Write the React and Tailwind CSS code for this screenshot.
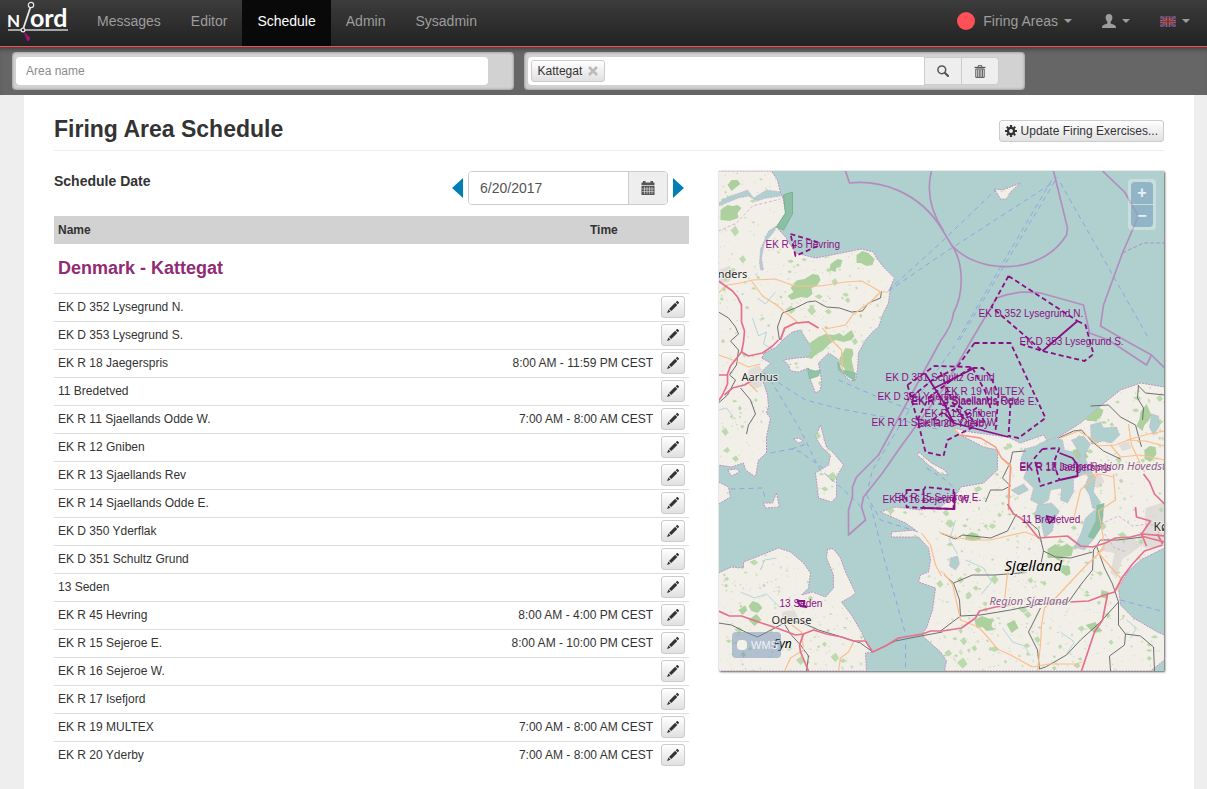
import React from "react";

const NAV = ["Messages", "Editor", "Schedule", "Admin", "Sysadmin"];

const AREAS = [
  ["EK D 352 Lysegrund N.", ""],
  ["EK D 353 Lysegrund S.", ""],
  ["EK R 18 Jaegerspris", "8:00 AM - 11:59 PM CEST"],
  ["11 Bredetved", ""],
  ["EK R 11 Sjaellands Odde W.", "7:00 AM - 8:00 AM CEST"],
  ["EK R 12 Gniben", ""],
  ["EK R 13 Sjaellands Rev", ""],
  ["EK R 14 Sjaellands Odde E.", ""],
  ["EK D 350 Yderflak", ""],
  ["EK D 351 Schultz Grund", ""],
  ["13 Seden", ""],
  ["EK R 45 Hevring", "8:00 AM - 4:00 PM CEST"],
  ["EK R 15 Sejeroe E.", "8:00 AM - 10:00 PM CEST"],
  ["EK R 16 Sejeroe W.", ""],
  ["EK R 17 Isefjord", ""],
  ["EK R 19 MULTEX", "7:00 AM - 8:00 AM CEST"],
  ["EK R 20 Yderby", "7:00 AM - 8:00 AM CEST"],
];

/* ---------- icons ---------- */

function Caret() {
  return (
    <svg viewBox="0 0 8 4" className="h-1 w-2" fill="currentColor" aria-hidden="true">
      <path d="M0 0h8L4 4z" />
    </svg>
  );
}

function UserIcon() {
  return (
    <svg viewBox="0 0 14 14" className="size-3.5" fill="currentColor" aria-hidden="true">
      <path d="M7 0C4.800 0 3.600 1.500 3.600 3.600c0 1.800.8 3.300 1.800 4.200v1.500c-.2.700-3.800 1.300-4.800 2.400C.1 12.300 0 13 0 14h14c0-1-.1-1.700-.6-2.300-1-1.100-4.600-1.700-4.800-2.400V7.800c1-.9 1.800-2.400 1.800-4.200C10.400 1.500 9.200 0 7 0z" />
    </svg>
  );
}

function FlagIcon() {
  return (
    <svg viewBox="0 0 16 11" className="h-[11px] w-4 opacity-60" aria-hidden="true">
      <rect width="16" height="11" fill="#2f55a8" />
      <path d="M0 0l16 11M16 0L0 11" stroke="#c8c8c8" strokeWidth="2" />
      <path d="M0 0l16 11M16 0L0 11" stroke="#d8283c" strokeWidth="1.100" />
      <path d="M8 0v11M0 5.500h16" stroke="#c8c8c8" strokeWidth="3.200" />
      <path d="M8 0v11M0 5.500h16" stroke="#d8283c" strokeWidth="2.200" />
    </svg>
  );
}

function SearchIcon() {
  return (
    <svg viewBox="0 0 12 12" className="size-3" fill="none" stroke="currentColor" aria-hidden="true">
      <circle cx="4.800" cy="4.800" r="3.900" strokeWidth="1.500" />
      <path d="M7.800 7.800l3.300 3.300" strokeWidth="2.100" strokeLinecap="round" />
    </svg>
  );
}

function TrashIcon() {
  return (
    <svg viewBox="0 0 12 13" className="h-[13px] w-3" fill="none" stroke="currentColor" aria-hidden="true">
      <path d="M4.200 2V.7h3.600V2" />
      <path d="M.5 2.500h11" strokeWidth="1.200" />
      <path d="M1.800 4h8.400v8.400H1.800z" strokeWidth="1" />
      <path d="M3.700 4.500v7.500M5.300 4.500v7.500M6.900 4.500v7.500M8.500 4.500v7.500" strokeWidth=".9" />
    </svg>
  );
}

function CogIcon() {
  return (
    <svg viewBox="0 0 12 12" className="size-3" fill="none" stroke="currentColor" aria-hidden="true">
      <circle cx="6" cy="6" r="3.100" strokeWidth="2.300" />
      <path
        d="M6 0v2M6 10v2M0 6h2M10 6h2M1.800 1.800l1.400 1.400M8.800 8.800l1.400 1.400M1.800 10.200l1.400-1.400M8.800 3.200l1.400-1.400"
        strokeWidth="2.200"
      />
    </svg>
  );
}

function CalendarIcon() {
  return (
    <svg viewBox="0 0 14 14" className="size-3.5" fill="currentColor" aria-hidden="true">
      <path d="M.5 1.500h1.500V0h2.500v1.500h5V0H12v1.500h1.500v2.800H.5z" />
      <path d="M.5 5h13v9H.5z" />
      <path d="M3.500 5.800v7.400M6 5.800v7.400M8.500 5.800v7.400M11 5.800v7.400M1.200 8h11.600M1.200 10.600h11.600" stroke="#eee" strokeWidth=".6" />
    </svg>
  );
}

function PencilIcon() {
  return (
    <svg viewBox="0 0 12 12" className="size-3" fill="currentColor" aria-hidden="true">
      <path d="M9.800.2c.3-.3.700-.3 1 0l1 1c.3.300.3.700 0 1l-1 1.100-2.100-2.100z" />
      <path d="M8.100 1.800l2.200 2.200-6 6.100L2 7.900z" />
      <path d="M1.400 8.600l2.100 2.100L.1 11.900z" />
    </svg>
  );
}

function Logo() {
  return (
    <svg viewBox="0 0 64 44" className="h-11 w-16" role="img" aria-label="Njord">
      <g fill="#fff" fontFamily="Lato, sans-serif" fontWeight="700">
        <text x="2" y="27" fontSize="17">N</text>
        <text x="25" y="27" fontSize="25">ord</text>
      </g>
      <path d="M3 30h60" stroke="#cfcfcf" strokeWidth="1.500" />
      <path d="M25.200 8L18.500 28" stroke="#e8e8e8" strokeWidth="1.800" />
      <circle cx="26" cy="5" r="2.700" fill="#333" stroke="#e8e8e8" strokeWidth="1.200" />
      <circle cx="18" cy="30" r="1.900" fill="#333" stroke="#e8e8e8" strokeWidth="1.200" />
      <path d="M19.500 33l5 4.500-.3 2.500-1.700.5z" fill="#a3117c" stroke="#a3117c" strokeLinejoin="round" />
    </svg>
  );
}

/* ---------- map ---------- */

const LAND = [
  "M718 171H771L777 180 780 193 783 200 785 213 776 227 785 237 795 253 815 258 831 255 861 249 873 252 876 258 883 267 894 278 890 287 888 303 883 313 878 327 873 331 865 340 858 353 857 370 855 380 850 381 838 370 840 362 836 358 828 353 818 363 821 380 820 390 815 393 810 380 808 368 798 372 790 371 788 365 783 360 796 358 808 357 812 350 806 340 800 330 792 332 783 339 776 347 764 353 761 358 770 363 760 373 763 383 767 395 768 407 766 413 770 418 766 437 766 453 758 460 755 477 745 470 743 463 731 467 718 465Z",
  "M718 482L728 487 730 497 718 504Z",
  "M727 470l9-1 3 3-8 4z",
  "M820 425L824 440 826 447 833 453 843 465 836 477 836 497 831 502 818 498 815 473 828 465 830 455 821 447 815 437Z",
  "M776 493L779 507 765 508 763 503 772 503Z",
  "M793 439l5-1 5 3-5 2z",
  "M918 452L931 463 944 470 948 475 940 474 928 465 917 455Z",
  "M718 573L731 567 743 568 743 562 761 555 778 548 790 552 803 563 810 573 808 588 801 595 812 592 825 597 833 588 833 575 826 558 827 549 833 549 840 558 845 572 855 593 850 597 841 602 851 615 861 632 865 641 873 652 865 653 866 671H718Z",
  "M953 428L970 432 1007 437 1020 443 1043 435 1047 441 1058 437 1080 423 1100 406 1120 390 1140 383 1164 387V548L1140 560 1127 572 1118 588 1120 605 1133 618 1157 632 1164 635V660L1150 671H944L946 661 940 652 921 635 926 628 932 610 935 588 918 582 920 575 928 572 930 560 928 548 918 537 891 537 891 532 915 530 905 523 880 512 895 507 920 510 940 507 957 493 960 487 983 483 997 470 997 450 983 447 960 435Z",
  "M994 189l8 1 18-7-10 9-4 7-6 0z",
];

const INLETS = [
  "M718 203L727 197 739 193 747 190 753 198 766 190 780 192 780 196 766 198 756 201 748 196 738 198 728 202 718 206Z",
  "M776 226l-8 5-8 18-1 14 1 7h3l-2-12 3-15 10-12z",
  "M1024 449L1035 446 1052 437 1062 440 1064 450 1072 452 1078 460 1085 462 1084 474 1073 479 1073 492 1067 503 1060 500 1061 488 1050 490 1048 500 1040 505 1030 500 1033 488 1023 478 1026 470 1020 460Z",
  "M1071 440l12-4 7 8-6 12 5 13 6 8-2 15 7 10-3 8-5-2-3-13-5-8 4-10-10-12 2-10z",
  "M1090 425l10-3 3 6 13-1 3 8-8 8-8-2-12 3z",
  "M1151 414l7 2 1 10-6 9-4-8z",
  "M1037 505l14-2 8 8-5 8-2 12-8 7-3-14-7-7z",
  "M1085 518l9-8 9 4-2 12-7 12-10 12-10-3 7-15z",
  "M1011 490l12-6 5 6-10 5z",
  "M950 558l7-2 2 8-4 6-6-4z",
];

const FORESTS = [
  "M790 288l8-8 6 -1 8-5 6 1 2 5-4 6-5 2 1 6-5 4-7-1-9 3-4-4 6-4z",
  "M830 264l7-5 5 1-2 7-4 1-1 4-6-2z",
  "M856 255l6-4 6 2 6 6-2 6-6 1-6-3-4 0z",
  "M720 210l7-5 5 1 5-1 4 3-4 5 1 5-9 3-9-1z",
  "M727 185l4-5 6 0 3 4-4 3-5 4z",
  "M803 335l6 8 9-6 7-3 8 1 6-2 4 3 8-6 3 6-3 4-8 2-8-2-6 4-7 7-6 3-5 5-6-2-3-7z",
  "M839 358l6-10 7 1 1 5-2 5 3 14-8 0-3-6-4-2z",
  "M1084 412l6-5 5-1 8 4-2 6-6 5-7 0-5-2z",
  "M1140 412l6-8 5 11-3 6-4 4-2 6-6-5 3-7z",
  "M1144 450l5-4 6 1 1 7-6 8-6-3z",
  "M1072 450l10-2 6 9-6 4-6-2z",
  "M974 620l7-4 6 2 5 2-1 6 3 4-8 1-4-4-6 1z",
  "M965 536l6-4 6 2 4 5-8 2-8-1z",
  "M1047 549l8-5 4 3 8-3 6 4-2 8-9 1-3 4-5-3-7 0z",
  "M1060 565l9 1 1 8-4 2-6-4z",
  "M1006 624l8-4 4 8-7 5z",
  "M1085 625l10-3 3 5 4 4-8 2-4-3z",
  "M748 606l4-5 6 2 4 5-5 5-6-2z",
  "M748 620l8-6 5 6-7 6z",
  "M738 610l6-4 3 4-5 5z",
  "M1101 590l7 2-1 7-7-2z",
];

function scatter(count, largest) {
  let seed = 71 + count;
  const next = () => {
    seed = (seed * 16807) % 2147483647;
    return seed / 2147483647;
  };
  let d = "";
  for (let i = 0; i < count; i += 1) {
    const x = 718 + next() * 446;
    const y = 171 + next() * 500;
    const s = 0.6 + next() * next() * largest;
    const a = s * (0.5 + next());
    d += `M${x.toFixed(1)} ${y.toFixed(1)}l${s.toFixed(1)} ${(-a * 0.6).toFixed(1)} ${(s * 0.7).toFixed(1)} ${(a * 0.8).toFixed(1)} ${(-s * 0.8).toFixed(1)} ${(a * 0.6).toFixed(1)}z`;
  }
  return d;
}
const WOODS = scatter(1100, 6);
const GROVES = scatter(2600, 2);

const RED_ROADS = [
  "M718 281L725 286 732 291 737 297 741 305 741 322 744 331 743 342 741 352",
  "M780 340L784 328 795 323 808 322 818 328",
  "M741 352L748 356 762 353 772 346 778 340",
  "M741 352L730 366 727 374 727 384 722 395 718 401",
  "M718 375H727M724 395L732 388 744 385 752 380",
  "M718 611L729 616 741 616 761 623 779 629 795 635 803 634 813 630 826 634 841 637 853 641 865 641 872 652 885 646 898 638 922 634 930 631 942 631 961 628 975 618 979 611 995 607 1010 605",
  "M803 634L799 645 800 652 808 671",
  "M1070 602L1088 601 1104 595 1114 592 1122 577 1132 564 1144 551 1162 545",
  "M1007 504L1013 514 1020 518 1026 523 1038 538 1052 537 1067 536 1080 546 1092 547 1105 543 1115 538 1130 537 1142 534 1164 536",
  "M1143 474L1149 482 1154 494 1164 504M1135 507L1136 517 1150 521 1141 534 1146 546",
  "M1107 594L1104 610 1102 620 1094 632 1088 650 1081 671",
  "M1164 542L1152 539 1141 536M1157 534L1162 544",
];

const ORANGE_ROADS = [
  "M718 293L727 285 740 283 752 280 775 279 794 286 820 286 845 282 861 281 872 287 880 292 888 292",
  "M751 281L762 296 776 305 787 314 797 322",
  "M880 292L870 302 852 315 845 325 825 329 M822 328L831 340 841 350 842 372",
  "M718 355L735 361 748 367 760 364M748 383L757 392",
  "M953 428L960 435 980 438 995 447 1001 458 1011 468 1008 490 1008 510",
  "M940 533L953 537 972 540 990 540 1007 536 1025 532 1040 538",
  "M1008 565L1004 600M1104 548L1085 566 1055 598 1044 608 1041 625 1040 645 1037 671",
  "M943 573L952 584 960 620 978 627 988 638 997 649 1010 655 1032 667 1048 664 1075 664 1082 662",
  "M1060 438L1078 431 1090 438 1098 446 1115 445 1130 439 1148 434 1164 431",
  "M1128 424L1131 445 1144 472M1127 440L1145 441 1164 446M1110 445L1120 457 1140 455 1164 460",
  "M1113 474L1115 500 1098 511 1104 545 1098 553 1120 578 1118 590",
  "M1083 475L1100 474 1113 477M1098 474L1080 490 1073 520",
  "M791 625L801 632 803 650 790 658 784 671M853 642L848 652 840 658 838 671",
  "M921 533L930 545 935 565 941 576",
];

const RAILS = [
  "M718 312L728 318 735 327 738 334 730 341M779 340L777 327 782 313 795 308 807 302 815 301 826 307 839 308 851 312 862 311 868 303 880 298 881 291",
  "M730 341L738 350 736 365 729 375 735 380 727 395 718 403M740 388L750 400 755 414 748 425 746 434",
  "M718 623L731 625 745 632 757 637 780 625 786 622 800 622 818 630 838 636 860 643 872 652 895 641 915 637 942 632",
  "M784 624L790 634 800 645 808 656 806 671",
  "M1058 438L1073 431 1081 430 1092 442 1103 451 1120 459M1090 406L1108 405 1120 417 1135 425 1141 447M1138 385L1137 398 1143 408 1142 420M1138 386L1145 393 1164 395",
  "M1025 451L1012 452 1010 462 1002 478 1010 486 1002 490 990 490 985 502",
  "M940 631L960 616 980 615 1010 610 1040 604 1068 602 1080 585 1092 570 1093 550 1100 540 1117 540 1142 537",
  "M944 575L953 583 972 575 994 575 1020 573 1033 566M953 583L959 600 960 616",
  "M940 533L955 539 962 535 990 538 1007 531 1016 514M1026 520L1038 530 1043 551 1055 557 1070 558 1092 552M1043 551L1040 566",
  "M1096 546L1104 568 1112 584 1118 602 1118 625 1125 634 1124 645 1109 656 1110 671M1125 634L1140 636 1153 647 1154 671",
  "M1118 602L1100 622 1080 640 1066 655 1045 667 1039 669 1037 650 1028 632 1040 608",
];

const FERRIES = [
  "M888 290L940 243 995 190M888 291L942 254 1055 181M959 340L1057 177M957 340L1053 177M1060 183L1149 340",
  "M763 373L805 400 840 409 900 420 940 430M770 380L800 430 812 455 819 469 840 487 860 506",
  "M770 453L791 449 800 452 822 468M791 449L806 444M730 489L762 488 765 500",
  "M838 380L870 394 910 410M866 495L872 470 912 405 954 346",
  "M866 495L880 520 918 532M870 505L884 560 905 634 905 671",
  "M926 468L945 480 956 490M1120 600L1164 612",
];

const SEA_LIMITS = [
  "M845 171L849 183C878 180 918 190 942 230L951 245C976 274 1040 277 1066 235L1067 228 1053 171",
  "M931 171C926 190 930 211 943 231",
  "M951 245C962 260 965 290 953 313C952 323 946 333 940 341L878 455 856 477 852 487 852 497 848 510V535L865 520 861 507 863 497 882 473 900 447 942 390 971 340 996 298C1017 290 1031 292 1040 293L1083 305 1089 333 1108 340 1146 365 1151 355 1164 368",
  "M1102 171L1124 192 1138 216 1122 253 1103 305 1100 326 1124 340 1151 355",
];

const ZONES = [
  "M1008 276L1077 321M1008 276L991 307 1042 351M1077 321L1085 325 1093 354 1084 361 1042 351 1020 344",
  "M974 343H1010L1045 418 1018 438 1008 436M974 343L956 368 932 380 907 400",
  "M907 385L934 366 972 367 945 384M907 385L911 400 917 420 925 452 943 456 947 440 977 425 960 407 940 405",
  "M972 368L982 368 990 376 998 395 995 431M1010 403L1008 436M972 368L985 392 990 408M917 420L928 398 951 380",
  "M940 372L952 402 962 418 976 408 986 425M932 420L948 408 968 418",
  "M906 490H923L925 487 953 490V509L923 508 906 507ZM923 490V508",
  "M1042 449L1059 448M1042 449L1034 458 1040 486 1059 480M1059 448L1053 463 1059 480",
  "M790 234L817 242V246L795 256Z",
];

const ZONE_EDGES = [
  "M1077 321L1042 351",
  "M925 374L943 402 953 423 1008 437",
  "M972 369L932 389",
  "M953 423L945 414",
  "M1059 453L1072 458 1077 465V476L1059 480",
  "M923 508L954 509V492",
  "M1046 516l8 2-5 5z",
  "M797 601l7 0-1 4 3 2-6-1z",
];

const ZONE_LABELS = [
  [765, 248, "EK R 45 Hevring"],
  [978, 317, "EK D 352 Lysegrund N."],
  [1019, 345, "EK D 353 Lysegrund S."],
  [885, 381, "EK D 351 Schultz Grund"],
  [944, 395, "EK R 19 MULTEX"],
  [877, 400, "EK D 350 Yderflak"],
  [911, 404, "EK R 13 Sjaellands Rev"],
  [911, 405, "EK R 14 Sjaellands Odde E."],
  [924, 417, "EK R 12 Gniben"],
  [871, 426, "EK R 11 Sjaellands Odde W."],
  [917, 427, "EK R 20 Yderby"],
  [1019, 471, "EK R 18 Jaegerspris"],
  [1019, 470, "EK R 17 Isefjord"],
  [894, 501, "EK R 15 Sejeroe E."],
  [882, 503, "EK R 16 Sejeroe W."],
  [1021, 523, "11 Bredetved"],
  [779, 607, "13 Seden"],
];

function Paths({ list }) {
  return list.map((d) => <path key={d} d={d} />);
}

function MapDrawing() {
  return (
    <svg
      viewBox="718 171 446 500"
      preserveAspectRatio="xMidYMid slice"
      className="block h-[500px] w-full bg-[#b0d0cf]"
      role="img"
      aria-label="Map of firing areas in Kattegat"
    >
      <defs>
        <clipPath id="land">
          <Paths list={LAND} />
        </clipPath>
      </defs>
      <g fill="#f2efe9" stroke="#c090c4" strokeWidth="1" strokeDasharray="2 1">
        <Paths list={LAND} />
      </g>
      <g clipPath="url(#land)">
        <g fill="#dfdcd9">
          <path d="M748 370l10-5 6 8-3 14-8 2-6-8z" />
          <path d="M782 612l12-2 4 9-8 5-9-3zM718 270l11-4 5 8-6 8-10 1z" />
          <path d="M1145 508l19-6v44l-20 2-8-10 8-8zM1102 543l30-6 10 8-20 14-6 18-6-4 4-20-12-2z" />
          <path d="M1088 480l12-6 4 8-8 6zM1118 445l10-4 3 7-9 3z" />
        </g>
        <path d={GROVES} fill="#d3e2c6" />
        <path d={WOODS} fill="#bddaaf" />
        <g fill="#add19e">
          <Paths list={FORESTS} />
        </g>
        <g fill="#b0d0cf" stroke="#c9a3cc" strokeWidth=".6" strokeDasharray="2 1">
          <Paths list={INLETS} />
        </g>
        <g fill="none" stroke="#aed2da" strokeWidth=".9">
          <path d="M752 318l6 18 8-4-3 12 10 6M775 292l-10 12-8-6M718 410l8-2 6 8M955 520l-6 20 8 14M965 560l18 8 8 14-10 12M1002 628l10 14 12 4 6 10M1060 632l14 10-8 12M1126 620l10 8-6 10M740 592l14 6 12-4 14 14M760 570l4-10 12-2" />
        </g>
        <path d="M718 231l18-8 16-17 28-7M1100 524l18-8 14 10 18-2 12 12M1104 534l10 14 12 4" fill="none" stroke="#cfa5cf" strokeWidth=".8" strokeDasharray="3 2" />
      </g>
      <path d="M783 195L792 192V214L783 230 776 227 785 213Z" fill="#8bc0a5" stroke="#79b295" />
      <path d="M807 369l8 2 5-1-2 6-9 3zM837 362l4 8 14 3-1 8-16-11z" fill="#8fc4a8" stroke="#79b295" strokeWidth=".6" />
      <path d="M1096 505l8-2-3 24-8 12-6-2 8-16z" fill="#8bc0a5" />
      <g fill="none" strokeLinejoin="round">
        <g stroke="#6f6f6f" strokeWidth="1">
          <Paths list={RAILS} />
        </g>
        <g stroke="#fbbf8c" strokeWidth="1.200">
          <Paths list={ORANGE_ROADS} />
        </g>
        <g stroke="#f3998a" strokeWidth="1.400">
          <path d="M780 338L785 328 795 323 808 322 818 328M960 435L980 438 995 447 1001 458 1010 465 1008 510M1007 504L1013 514" />
        </g>
        <g stroke="#e5718d" strokeWidth="1.700">
          <Paths list={RED_ROADS} />
        </g>
        <g stroke="#8aa0e2" strokeWidth=".9" strokeDasharray="5 4">
          <Paths list={FERRIES} />
        </g>
        <g stroke="#b38dbe" strokeWidth="1.700">
          <Paths list={SEA_LIMITS} />
        </g>
        <path d="M1122 253L1143 243 1164 243" stroke="#b38dbe" strokeWidth="1" strokeDasharray="4 2" />
      </g>
      <g fontFamily="'Noto Sans', sans-serif" fill="#2b2b2b" stroke="#f7f4ef" strokeWidth="2" strokeOpacity=".7" paintOrder="stroke">
        <text x="711" y="278" fontSize="11">anders</text>
        <text x="741" y="381" fontSize="11">Aarhus</text>
        <text x="771" y="624" fontSize="11">Odense</text>
        <text x="1153" y="531" fontSize="12">København</text>
        <text x="773" y="648" fontSize="12" fontStyle="italic" fill="#000">Fyn</text>
        <text x="1004" y="571" fontSize="15" fontStyle="italic" fill="#000">Sjælland</text>
        <text x="989" y="605" fontSize="11" fontStyle="italic" fill="#8d618b">Region Sjælland</text>
        <text x="1090" y="470" fontSize="11" fontStyle="italic" fill="#8d618b">Region Hovedstaden</text>
      </g>
      <g fill="none" stroke="#8b0f84" strokeWidth="1.800" strokeLinejoin="round">
        <g strokeDasharray="5 3">
          <Paths list={ZONES} />
        </g>
        <Paths list={ZONE_EDGES} />
      </g>
      <g fontFamily="'Liberation Sans', Arial, sans-serif" fontSize="10" fill="#8b0f84">
        {ZONE_LABELS.map(([x, y, name]) => (
          <text key={name} x={x} y={y}>
            {name}
          </text>
        ))}
      </g>
    </svg>
  );
}

function AreaMap() {
  return (
    <div className="relative shadow-[1px_1px_2px_rgba(0,0,0,0.6),0_0_1px_rgba(0,0,0,0.3)]">
      <MapDrawing />
      <div className="absolute top-2 right-2 flex flex-col gap-px rounded bg-white/30 p-[3px]">
        <button className="h-[22px] w-[22px] rounded-t-sm bg-[#6c97b8]/60 text-base leading-5 font-bold text-white/80" aria-label="Zoom in">
          +
        </button>
        <button className="h-[22px] w-[22px] rounded-b-sm bg-[#6c97b8]/60 text-base leading-5 font-bold text-white/80" aria-label="Zoom out">
          −
        </button>
      </div>
      <label className="absolute bottom-[13px] left-[13px] flex h-[26px] w-[49px] items-center gap-1 overflow-hidden rounded-sm bg-[#6f8fb5]/50 pl-[5px] text-[11px] text-white/80">
        <input type="checkbox" className="size-2.5 shrink-0 appearance-none rounded-sm bg-[#f2f2e8]" />
        WMS
      </label>
    </div>
  );
}

/* ---------- page ---------- */

const raised = "border border-[#ccc] bg-gradient-to-b from-white to-[#e0e0e0] text-[#333]";

function Header() {
  return (
    <header className="flex h-[47px] items-stretch border-b border-[#ff4a52] bg-gradient-to-b from-[#3c3c3c] to-[#222] pr-0.5 pl-[5px] text-sm text-[#9d9d9d]">
      <a href="#home" className="mr-[13px]">
        <Logo />
      </a>
      <nav className="flex">
        {NAV.map((item) => (
          <a
            key={item}
            href={`#${item.toLowerCase()}`}
            className={
              item === "Schedule"
                ? "flex items-center bg-[#090909] px-[15px] pb-1 text-white"
                : "flex items-center px-[15px] pb-1"
            }
          >
            {item}
          </a>
        ))}
      </nav>
      <div className="ml-auto flex pb-1">
        <button className="flex items-center px-[15px]">
          <span className="mr-2 size-[18px] rounded-full bg-[#ff4f57]" />
          <span className="mr-1.5">Firing Areas</span>
          <Caret />
        </button>
        <button className="flex items-center gap-1.5 px-[15px]" aria-label="Account">
          <UserIcon />
          <Caret />
        </button>
        <button className="flex items-center gap-1.5 px-[15px]" aria-label="Language">
          <FlagIcon />
          <Caret />
        </button>
      </div>
    </header>
  );
}

function FilterBar() {
  const panel = "flex h-[38px] w-[42.4%] items-center rounded-sm bg-[#d2d2d2] pr-[26px] pl-1 shadow-[inset_0_0_3px_rgba(0,0,0,0.45)]";
  return (
    <div className="flex gap-2.5 bg-[#666] px-3 py-[5px] shadow-[inset_0_5px_5px_-3px_rgba(0,0,0,0.4)]">
      <div className={panel}>
        <input
          type="text"
          aria-label="Area name"
          placeholder="Area name"
          className="h-7 w-full rounded-sm bg-white px-2.5 text-xs placeholder:text-[#8c8c8c]"
        />
      </div>
      <div className={panel}>
        <div className="flex h-7 flex-1 items-center rounded-l bg-white pl-[3px]">
          <span className={`flex h-[22px] items-center gap-1.5 rounded-[3px] px-1.5 text-xs ${raised}`}>
            Kattegat
            <button aria-label="Remove Kattegat" className="text-[#bbb]">
              <svg viewBox="0 0 10 10" className="size-2.5" stroke="currentColor" strokeWidth="2.600" aria-hidden="true">
                <path d="M1 1l8 8M9 1L1 9" />
              </svg>
            </button>
          </span>
          <input type="text" aria-label="Areas" className="h-6 min-w-0 flex-1 bg-transparent px-1 text-xs" />
        </div>
        <button aria-label="Search" className="flex h-7 w-[38px] items-center justify-center border border-[#ccc] bg-[#eee] text-[#555]">
          <SearchIcon />
        </button>
        <button aria-label="Clear" className="flex h-7 w-[37px] items-center justify-center rounded-r border border-l-0 border-[#ccc] bg-[#eee] text-[#555]">
          <TrashIcon />
        </button>
      </div>
    </div>
  );
}

function DatePicker() {
  return (
    <div className="flex h-[45px] items-start justify-between pr-[5px]">
      <label htmlFor="schedule-date" className="text-sm leading-5 font-bold">
        Schedule Date
      </label>
      <div className="flex h-[34px] items-center gap-[5px]">
        <button aria-label="Previous day" className="text-[#007fb5]">
          <svg viewBox="0 0 11 20" className="h-5 w-[11px]" fill="currentColor" aria-hidden="true">
            <path d="M11 0v20L0 10z" />
          </svg>
        </button>
        <div className="flex h-[34px] w-[200px] overflow-hidden rounded border border-[#ccc]">
          <input
            id="schedule-date"
            type="text"
            defaultValue="6/20/2017"
            className="min-w-0 flex-1 bg-white px-[11px] text-sm text-[#555]"
          />
          <button aria-label="Open calendar" className="flex w-[39px] items-center justify-center border-l border-[#ccc] bg-[#eee] text-[#555]">
            <CalendarIcon />
          </button>
        </div>
        <button aria-label="Next day" className="text-[#007fb5]">
          <svg viewBox="0 0 11 20" className="h-5 w-[11px]" fill="currentColor" aria-hidden="true">
            <path d="M0 0v20l11-10z" />
          </svg>
        </button>
      </div>
    </div>
  );
}

function ScheduleTable() {
  return (
    <table className="w-full text-xs">
      <thead>
        <tr className="h-7 bg-[#d2d2d2]">
          <th className="pl-1 text-left font-bold">Name</th>
          <th className="w-[152px] pl-[85px] text-left font-bold">Time</th>
          <th className="w-8" aria-label="Edit" />
        </tr>
      </thead>
      <tbody>
        <tr>
          <td colSpan={3} className="h-[49px] pl-1 text-lg leading-5 font-bold text-[#912b73]">
            Denmark - Kattegat
          </td>
        </tr>
        {AREAS.map(([name, time]) => (
          <tr key={name} className="border-t border-[#ddd]">
            <td className="h-7 pl-1">{name}</td>
            <td className="pr-1 text-right whitespace-nowrap">{time}</td>
            <td className="pr-1">
              <button
                aria-label={`Edit ${name}`}
                className={`ml-auto flex h-[22px] w-6 items-center justify-center rounded-[3px] ${raised}`}
              >
                <PencilIcon />
              </button>
            </td>
          </tr>
        ))}
      </tbody>
    </table>
  );
}

export default function App() {
  return (
    <div className="flex min-h-screen flex-col bg-[#eee] font-['Liberation_Sans',Arial,sans-serif] text-[#333]">
      <Header />
      <FilterBar />
      <main className="mr-[13px] ml-6 flex-1 bg-white px-[30px] pt-5">
        <div className="flex h-9 items-start justify-between border-b border-[#eee]">
          <h1 className="text-[23px] leading-7 font-bold">Firing Area Schedule</h1>
          <button className={`mt-[5px] flex h-[22px] items-center gap-1 rounded-[3px] px-[5px] text-xs ${raised}`}>
            <CogIcon />
            Update Firing Exercises...
          </button>
        </div>
        <div className="grid grid-cols-12 gap-[30px] pt-5">
          <section className="col-span-7">
            <DatePicker />
            <ScheduleTable />
          </section>
          <section className="col-span-5">
            <AreaMap />
          </section>
        </div>
      </main>
    </div>
  );
}
